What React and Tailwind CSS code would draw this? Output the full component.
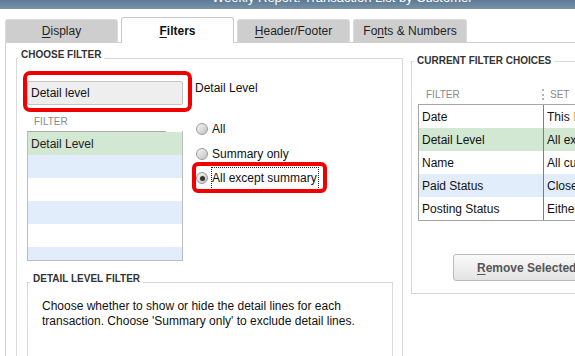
import React from 'react';

const tabs = [
  { pre: '', key: 'D', post: 'isplay', w: 'w-[113px]' },
  { pre: '', key: 'F', post: 'ilters', w: 'w-[113px]', active: true },
  { pre: '', key: 'H', post: 'eader/Footer', w: 'w-[113px]' },
  { pre: 'Fo', key: 'n', post: 'ts & Numbers', w: 'w-[114px]' },
];

const choices = [
  { name: 'Date', value: <>This <span className="text-[#f2b33d]">Month-to-date</span></>, bg: 'bg-white' },
  { name: 'Detail Level', value: 'All except summary', bg: 'bg-[#d3e8d2]' },
  { name: 'Name', value: 'All customers/jobs', bg: 'bg-white' },
  { name: 'Paid Status', value: 'Closed', bg: 'bg-[#e2edfb]' },
  { name: 'Posting Status', value: 'Either', bg: 'bg-white' },
];

const listRows = ['bg-[#d3e8d2]', 'bg-[#e2edfb]', 'bg-white', 'bg-[#e2edfb]', 'bg-white'];

function Tab({ tab }) {
  const label = (
    <span>
      {tab.pre}
      <span className="underline underline-offset-2">{tab.key}</span>
      {tab.post}
    </span>
  );
  if (tab.active) {
    return (
      <div className={`-mb-px flex h-[26px] ${tab.w} items-center justify-center rounded-t-[3px] border border-b-0 border-[#c8c8c8] bg-white text-[12px] font-bold text-[#111]`}>
        {label}
      </div>
    );
  }
  return (
    <div className={`flex h-[23px] ${tab.w} items-center justify-center rounded-t-[3px] border border-b-0 border-[#dadada] bg-[#cecece] text-[12px] text-[#222]`}>
      {label}
    </div>
  );
}

function Radio({ checked, label, h, focus }) {
  return (
    <div className={`relative flex ${h} w-fit items-center`}>
      <div className="ml-[1px] flex h-[12px] w-[12px] items-center justify-center rounded-full border border-[#9a9a9a] bg-linear-to-br from-[#f6f6f6] to-[#c2c2c2]">
        {checked && <div className="h-[5px] w-[5px] rounded-full bg-[#333]" />}
      </div>
      <span
        className={`ml-[3px] flex h-[23px] items-center border border-dotted pr-px text-[12px] text-[#111] ${
          focus ? 'border-[#222]' : 'border-transparent'
        }`}
      >
        {label}
      </span>
      {focus && (
        <div className="absolute -top-[4px] -right-[8px] -bottom-[3px] -left-[3px] rounded-[6px] border-[4px] border-[#f00000]" />
      )}
    </div>
  );
}

export default function App() {
  return (
    <div className="h-[356px] w-[575px] overflow-hidden bg-white font-['Liberation_Sans',Arial,sans-serif]">
      {/* Window title bar */}
      <div className="h-[9px] overflow-hidden bg-linear-to-b from-[#5d7b96] to-[#7891a6]">
        <div className="-mt-[9px] whitespace-nowrap pl-[212px] text-[13px] leading-[13px] text-white">
          Weekly Report: Transaction List by Customer
        </div>
      </div>

      <div className="pl-[5px]">
        {/* Tabs */}
        <div className="flex items-end gap-[3px] border-b border-[#d0d0d0] pt-[8px]">
          {tabs.map((t) => (
            <Tab key={t.key + t.post} tab={t} />
          ))}
        </div>

        {/* Tab panel */}
        <div className="flex h-[320px] items-start border-l border-[#d0d0d0]">
          {/* Choose filter */}
          <div className="relative mt-[15px] ml-[10px] h-[330px] w-[387px] shrink-0 border border-[#d9d9d9]">
            <span className="absolute -top-[9px] left-[1px] bg-white px-[3px] text-[10px] leading-[10px] font-bold text-[#333]">
              CHOOSE FILTER
            </span>

            <div className="flex">
              <div className="ml-[10px] w-[156px] shrink-0 pt-[22px]">
                <div className="relative flex h-[24px] items-center rounded-[2px] border border-[#c4c4c4] bg-[#eeeeee] pl-[3px] text-[12px] text-[#111]">
                  Detail level
                  <div className="absolute -top-[11px] -right-[10px] -bottom-[8px] -left-[5px] rounded-[7px] border-[4px] border-[#f00000]" />
                </div>
                <div className="mt-[11px] h-[12px] pl-[7px] text-[10px] leading-[12px] text-[#8a8a8a]">FILTER</div>
                <div className="mt-[3px] border-x border-b border-[#bdbdbd]">
                  <div className="-ml-px h-px w-[139px] bg-[#a9a9a9]" />
                  {listRows.map((bg, i) => (
                    <div key={i} className={`flex h-[23px] items-center pl-[3px] text-[12px] text-[#222] ${bg}`}>
                      {i === 0 ? 'Detail Level' : ''}
                    </div>
                  ))}
                  <div className="h-[13px] bg-[#e2edfb]" />
                </div>
              </div>

              <div className="ml-[12px] pt-[22px]">
                <div className="h-[14px] text-[12px] leading-[14px] text-[#111]">Detail Level</div>
                <div className="mt-[22px] flex flex-col">
                  <Radio label="All" h="h-[24px]" />
                  <Radio label="Summary only" h="h-[25px]" />
                  <Radio label="All except summary" h="h-[24px]" checked focus />
                </div>
              </div>
            </div>

            {/* Detail level filter */}
            <div className="relative mt-[21px] ml-[10px] h-[100px] w-[366px] border border-[#d9d9d9]">
              <span className="absolute -top-[9px] left-[2px] bg-white px-[3px] text-[10px] leading-[10px] font-bold text-[#333]">
                DETAIL LEVEL FILTER
              </span>
              <p className="pt-[16px] pl-[14px] text-[12px] leading-[15px] text-[#111]">
                Choose whether to show or hide the detail lines for each
                <br />
                transaction. Choose 'Summary only' to exclude detail lines.
              </p>
            </div>
          </div>

          {/* Current filter choices */}
          <div className="relative mt-[18px] ml-[8px] h-[233px] w-[220px] shrink-0 border border-[#d9d9d9]">
            <span className="absolute -top-[6px] left-[2px] bg-white px-[3px] text-[10px] leading-[10px] font-bold text-[#333]">
              CURRENT FILTER CHOICES
            </span>

            <div className="mt-[22px] ml-[6px] flex h-[20px] items-center text-[10px] text-[#8a8a8a]">
              <div className="w-[124px] pl-[8px]">FILTER</div>
              <div className="h-[11px] border-l-2 border-dotted border-[#b5b5b5]" />
              <div className="ml-[6px]">SET</div>
            </div>

            <div className="ml-[6px] w-[210px] border border-[#a6a6a6]">
              {choices.map((c) => (
                <div key={c.name} className={`flex h-[23px] items-center text-[12px] text-[#111] ${c.bg}`}>
                  <div className="flex h-full w-[125px] shrink-0 items-center border-r border-[#7d7d7d] pl-[3px]">
                    {c.name}
                  </div>
                  <div className="pl-[3px] whitespace-nowrap">{c.value}</div>
                </div>
              ))}
            </div>

            <button className="mt-[33px] ml-[41px] flex h-[27px] w-[180px] items-center rounded-[3px] border border-[#bababa] bg-linear-to-b from-[#fafafa] to-[#e3e3e3] pl-[23px] text-[12px] font-bold whitespace-nowrap text-[#555]">
              <span className="underline underline-offset-2">R</span>emove Selected Filter
            </button>
          </div>
        </div>
      </div>
    </div>
  );
}
